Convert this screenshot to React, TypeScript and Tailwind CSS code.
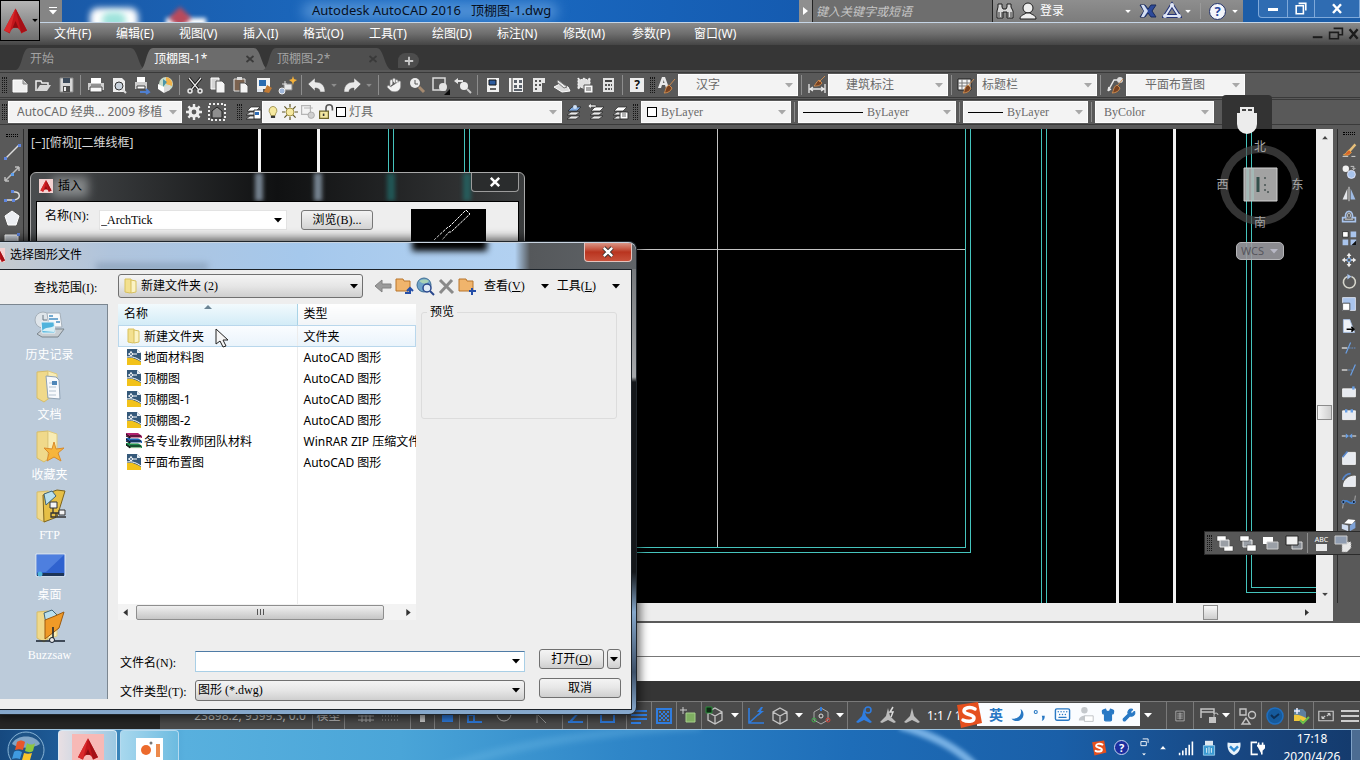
import React from 'react';
import { Hand, Moon, Wrench, Keyboard, Shirt } from 'lucide-react';

const SANS = "[font-family:'Noto_Sans','Noto_Sans_CJK_SC',sans-serif]";
const SONG = "[font-family:'Liberation_Serif','Noto_Sans_CJK_SC',serif]";

interface IcoProps {
  children: React.ReactNode;
  className?: string;
}

const Ico: React.FC<IcoProps> = ({ children, className = 'w-5 h-5' }) => (
  <svg viewBox="0 0 20 20" fill="none" className={`shrink-0 ${className}`}>
    {children}
  </svg>
);

const Caret: React.FC<{ className?: string }> = ({ className = 'text-[#a8a8a8]' }) => (
  <svg viewBox="0 0 8 5" className={`w-2 h-[5px] shrink-0 pointer-events-none ${className}`}>
    <path d="M0 0h8L4 4.5z" fill="currentColor" />
  </svg>
);

interface ComboProps {
  label: string;
  value: string;
  className: string;
  textClass?: string;
  children?: React.ReactNode;
}

const Combo: React.FC<ComboProps> = ({ label, value, className, textClass = SANS, children }) => (
  <div className={`flex items-center h-[22px] bg-[#f3f3f3] border border-[#fdfdfd] pr-1 shrink-0 text-[#6a6a6a] ${className}`}>
    {children}
    <select aria-label={label} className={`appearance-none flex-1 min-w-0 h-full bg-transparent outline-none text-xs ${textClass}`}>
      <option>{value}</option>
    </select>
    <Caret />
  </div>
);

const Grip = () => (
  <div className="w-2 h-4 shrink-0 flex justify-center gap-px">
    <div className="w-px border-l border-dotted border-[#161616]" />
    <div className="w-px border-l border-dotted border-[#161616]" />
    <div className="w-px border-l border-dotted border-[#161616]" />
  </div>
);

const HGrip = () => (
  <div className="h-[9px] flex flex-col items-center justify-center gap-px shrink-0">
    <div className="w-3 border-t border-dotted border-black" />
    <div className="w-3 border-t border-dotted border-black" />
  </div>
);

const Sep = () => <div className="w-px h-5 mx-[3px] bg-[#8d8d8d] shrink-0" />;

const ToolBtn: React.FC<{ label: string; children: React.ReactNode; className?: string }> = ({ label, children, className = 'w-[23px]' }) => (
  <button aria-label={label} className={`h-6 flex items-center justify-center shrink-0 ${className}`}>
    {children}
  </button>
);

const AutodeskA: React.FC<{ className?: string }> = ({ className }) => (
  <svg viewBox="0 0 24 26" className={className}>
    <path d="M12 0L0 23l6 3c1-4 3-6 6-6s5 2 6 6l6-3z" fill="#c3161c" />
    <path d="M12 0L6 25l-6-2z" fill="#d92a2c" />
    <path d="M12 0l6 25 6-2z" fill="#a51016" />
    <path d="M12 13l3 7H9z" fill="#8f0c12" />
  </svg>
);

/* ---------- title bar, menu, tabs ---------- */

const MENUS = ['文件(F)', '编辑(E)', '视图(V)', '插入(I)', '格式(O)', '工具(T)', '绘图(D)', '标注(N)', '修改(M)', '参数(P)', '窗口(W)'];

const MENU_WIDTHS = ['w-[62px]', 'w-[63px]', 'w-16', 'w-[60px]', 'w-[66px]', 'w-[63px]', 'w-[65px]', 'w-[66px]', 'w-[69px]', 'w-[62px]', 'w-[60px]'];

const TitleBar = () => (
  <div className="h-[23px] flex items-stretch bg-[#1660b4] border-b border-[#c5d5e6]">
    <div className="w-[62px] shrink-0 bg-[#858585] flex justify-end">
      <button aria-label="快速访问" className="w-[18px] flex flex-col items-center justify-center gap-[2px] text-white">
        <span className="w-2 h-px bg-white" />
        <Caret className="text-white" />
      </button>
    </div>
    <div className="flex-1 relative overflow-hidden bg-gradient-to-r from-[#1a5aa8] via-[#1b6cc4] to-[#155bb0] flex items-center">
      <div className="absolute left-7 top-2 w-12 h-6 rounded-lg bg-white blur-[3px]" />
      <div className="absolute left-10 top-3 w-6 h-4 rounded-full bg-[#9fe3dc] blur-[3px]" />
      <div className="absolute left-[104px] top-[18px] w-10 h-4 bg-white blur-[2px]" />
      <div className="absolute left-[110px] top-[10px] w-4 h-4 rotate-45 bg-[#b84a5c] blur-[2px]" />
      <div className="absolute left-60 top-[2px] w-64 h-[18px] rounded-full bg-[#6fa8e2]/60 blur-[6px]" />
      <h1 className="relative pl-[250px] text-[13px] text-[#06101f] whitespace-pre">Autodesk AutoCAD 2016   顶棚图-1.dwg</h1>
    </div>
    <div className="w-[444px] shrink-0 bg-gradient-to-b from-[#8e8e8e] to-[#7c7c7c] flex items-center text-white">
      <button aria-label="展开" className="w-[14px] h-full flex items-center justify-center bg-[#8f8f8f] border-r border-[#222]">
        <svg viewBox="0 0 5 8" className="w-[5px] h-2"><path d="M0 0l5 4-5 4z" fill="#fff" /></svg>
      </button>
      <input aria-label="搜索" placeholder="键入关键字或短语" className="w-[180px] h-full px-[3px] bg-[#6e6e6e] border-r border-[#222] text-xs italic placeholder:text-[#c6c6c6] outline-none" />
      <button aria-label="查找" className="ml-[2px]">
        <Ico>
          <path d="M3 3h4v3l1 2h3l1-2V3h4v3l2 4v7h-6v-6h-4v6H2v-7l1-4z" fill="#d8d8d8" stroke="#1d1d1d" />
          <path d="M4 11v5M7 11v5M13 11v5M16 11v5" stroke="#333" />
        </Ico>
      </button>
      <button className="flex items-center gap-[2px] ml-[3px] text-xs w-[100px]">
        <Ico>
          <circle cx="10" cy="7" r="5" fill="#eee" stroke="#1d1d1d" />
          <path d="M2 18c0-4 4-4 6-6h4c2 2 6 2 6 6z" fill="#eee" stroke="#1d1d1d" />
        </Ico>
        登录
      </button>
      <div className="w-[6px]" />
      <button aria-label="登录菜单" className="w-2"><Caret className="text-white scale-75" /></button>
      <button aria-label="Exchange" className="ml-[6px]">
        <Ico>
          <path d="M2 4h5l3 4 3-4h5l-4 6 4 6h-5l-3-4-3 4H2l4-6z" fill="#2d4a9a" stroke="#1a2b5c" />
          <path d="M3 4h3l4 6-4 6H3l3-6z" fill="#d5dff2" />
        </Ico>
      </button>
      <button aria-label="A360" className="ml-1">
        <Ico>
          <path d="M10 4l7 11H3z" stroke="#26357a" strokeWidth="4" />
          <path d="M10 4l7 11H3z" stroke="#dfe6f5" strokeWidth="2" />
          <circle cx="10" cy="4" r="2" fill="#dfe6f5" /><circle cx="3" cy="15" r="2" fill="#dfe6f5" /><circle cx="17" cy="15" r="2" fill="#dfe6f5" />
        </Ico>
      </button>
      <Caret className="text-white scale-75 ml-[2px]" />
      <div className="w-px h-4 bg-[#9a9a9a] ml-2" />
      <button aria-label="帮助" className="ml-2 w-[17px] h-[17px] shrink-0 rounded-full bg-[#f3f5fb] border border-[#23336b] text-[#27479e] text-[13px] leading-[15px] font-bold">?</button>
      <Caret className="text-white scale-75 ml-[5px]" />
    </div>
    <div className="w-[117px] shrink-0 bg-[#1c5da8] flex justify-end items-start">
      <div className="flex h-[18px] w-[102px] border border-t-0 border-[#7fa9da] rounded-bl bg-[#2f6cb2]">
        <button aria-label="最小化" className="w-[29px] flex items-end justify-center pb-[6px] border-r border-[#7fa9da]"><span className="w-[10px] h-[3px] bg-white" /></button>
        <button aria-label="还原" className="w-[27px] flex items-center justify-center border-r border-[#7fa9da]">
          <Ico className="w-4 h-4"><path d="M7 3h9v9M4 6h9v10H4z" stroke="#fff" strokeWidth="2" /></Ico>
        </button>
        <button aria-label="关闭" className="flex-1 flex items-center justify-center">
          <Ico className="w-4 h-4"><path d="M5 4l10 11M15 4L5 15" stroke="#fff" strokeWidth="3" /></Ico>
        </button>
      </div>
    </div>
  </div>
);

const MenuBar = () => (
  <nav className="h-[22px] flex items-center pl-[54px] bg-gradient-to-b from-[#8b8b8b] via-[#6d6d6d] to-[#454545] text-white text-xs">
    {MENUS.map((m, i) => (
      <button key={m} className={`text-left whitespace-nowrap shrink-0 ${MENU_WIDTHS[i]}`}>{m}</button>
    ))}
    <div className="ml-auto flex items-center">
      <button aria-label="最小化图形"><Ico className="w-4 h-4"><path d="M1 14h12" stroke="#1c1c1c" strokeWidth="2.5" /></Ico></button>
      <button aria-label="还原图形"><Ico className="w-4 h-4"><path d="M7 3h11v8h-5M2 8h11v8H2z" stroke="#1c1c1c" strokeWidth="2" /></Ico></button>
      <button aria-label="关闭图形"><Ico className="w-4 h-4"><path d="M7 4l10 12M17 4L7 16" stroke="#1c1c1c" strokeWidth="3" /></Ico></button>
    </div>
  </nav>
);

interface TabProps {
  name: string;
  active?: boolean;
  closable?: boolean;
  width: string;
}

const DocTab: React.FC<TabProps> = ({ name, active, closable, width }) => (
  <div className={`relative h-[22px] flex items-center shrink-0 ${width}`}>
    <svg viewBox="0 0 130 22" preserveAspectRatio="none" className="absolute inset-0 w-full h-full overflow-visible">
      <path d="M0 22C7 20 6 0 14 0h106c8 0 8 20 16 22z" fill={active ? '#6c6c6c' : '#4f4f4f'} />
    </svg>
    <button className={`relative pl-[14px] text-xs ${active ? 'text-white' : 'text-[#a3a3a3]'}`}>{name}</button>
    {closable && (
      <button aria-label="关闭标签" className="relative ml-auto mr-2">
        <Ico className="w-[10px] h-[10px]"><path d="M3 4l14 12M17 4L3 16" stroke="#3a3a3a" strokeWidth="3.5" /></Ico>
      </button>
    )}
  </div>
);

const TabStrip = () => (
  <div className="h-[25px] flex items-end bg-[#363636] pl-4">
    <DocTab name="开始" width="w-[124px]" />
    <DocTab name="顶棚图-1*" active closable width="w-[123px]" />
    <DocTab name="顶棚图-2*" closable width="w-[123px]" />
    <button aria-label="新建标签" className="ml-3 mb-[2px] w-[21px] h-[15px] rounded-full rounded-bl-none bg-[#4d4d4d] flex items-center justify-center">
      <Ico className="w-3 h-3"><path d="M10 3v14M3 10h14" stroke="#c9c9c9" strokeWidth="3" /></Ico>
    </button>
  </div>
);

/* ---------- toolbars ---------- */

const Brush = () => <path d="M18 4l-6 7M12 10l3 3c-1 3-4 5-8 5 2-2 1-6 5-8z" stroke="#c98a50" fill="#7a4220" />;

const StandardBar = () => (
  <div className="h-[26px] flex items-center border-t border-b border-[#3a3a3a]">
    <Grip />
    <ToolBtn label="新建"><Ico><path d="M3 5h10l4 4v8H3z" fill="#f0f0f0" stroke="#fff" /><path d="M13 5v4h4" fill="#bbb" stroke="#888" /></Ico></ToolBtn>
    <ToolBtn label="打开"><Ico><path d="M3 16V6h5l1 2h6v2" stroke="#eee" strokeWidth="1.5" /><path d="M3 16l4-6h11l-4 6z" fill="#d8d8d8" /></Ico></ToolBtn>
    <ToolBtn label="保存"><Ico><path d="M4 3h13v14H4z" fill="#d6d6d6" stroke="#8a8a8a" /><path d="M7 3h7v5H7z" fill="#3c4a5a" /><path d="M7 11h7v6H7z" fill="#4a4a4a" /><path d="M9 12v4" stroke="#eee" strokeWidth="2" /></Ico></ToolBtn>
    <Sep />
    <ToolBtn label="打印"><Ico><path d="M5 3h10v5H5z" fill="#fff" /><path d="M2 8h16v7H2z" fill="#cfcfcf" /><path d="M4 12h12v5H4z" fill="#f8f8f8" stroke="#444" /><path d="M5 10h10" stroke="#555" /></Ico></ToolBtn>
    <ToolBtn label="打印预览"><Ico><path d="M4 3h9l3 3v11H4z" fill="#eee" /><circle cx="10" cy="11" r="4" fill="#c9d2dc" stroke="#333" /><path d="M13 14l4 4" stroke="#ddd" strokeWidth="2" /></Ico></ToolBtn>
    <ToolBtn label="发布"><Ico><path d="M5 2h8v5H5z" fill="#fff" /><path d="M3 7h12v7H3z" fill="#cfcfcf" /><path d="M5 11h8v3H5z" fill="#fff" stroke="#444" /><path d="M8 17h9m-3-3l3 3-3 2" stroke="#4f7fd0" strokeWidth="2" /></Ico></ToolBtn>
    <ToolBtn label="三维打印"><Ico><circle cx="11" cy="9" r="7" fill="#c9dccb" /><path d="M11 2a7 7 0 016 9l-6-2z" fill="#f1b24a" /><path d="M8 4l4 3-4 5z" fill="#4b95a8" /><path d="M3 9l6 3v6l-6-4z" fill="#fff" /><path d="M9 12l6-2v5l-6 3z" fill="#d9d9d9" /></Ico></ToolBtn>
    <Sep />
    <ToolBtn label="剪切"><Ico><path d="M4 3l9 11M16 3L7 14" stroke="#111" strokeWidth="3" /><path d="M4 3l9 11M16 3L7 14" stroke="#e8e8e8" strokeWidth="1.2" /><circle cx="5" cy="16" r="2" stroke="#e8e8e8" strokeWidth="1.5" /><circle cx="15" cy="16" r="2" stroke="#e8e8e8" strokeWidth="1.5" /></Ico></ToolBtn>
    <ToolBtn label="复制"><Ico><path d="M3 3h8v11H3z" fill="#d4d4d4" stroke="#fff" /><path d="M8 6h6l3 3v9H8z" fill="#f4f4f4" stroke="#555" /></Ico></ToolBtn>
    <ToolBtn label="粘贴"><Ico><path d="M3 4h11v12H3z" fill="#7b624f" stroke="#e4e4e4" /><path d="M6 2h5v3H6z" fill="#ddd" /><path d="M9 8h5l3 3v7H9z" fill="#f4f4f4" stroke="#555" /></Ico></ToolBtn>
    <ToolBtn label="特性匹配"><Ico><path d="M3 3h13v11H3z" fill="#f1f1f1" /><path d="M5 5h7v6H5z" fill="#2b6cb0" /><path d="M13 10l-3 7 5 1 3-5z" fill="#c07a35" /><path d="M3 14h6v3H3z" fill="#dfe5ee" /></Ico></ToolBtn>
    <ToolBtn label="块编辑器"><Ico><path d="M7 9h8v6H7z" fill="#e8e8e8" stroke="#888" /><circle cx="5" cy="16" r="3" fill="#9fb6d9" stroke="#eee" /><path d="M5 9h5M8 6v4" stroke="#ddd" /><path d="M16 1l1 3 3 1-3 2-1 3-1-3-3-2 3-1z" fill="#f4b13a" /></Ico></ToolBtn>
    <Sep />
    <ToolBtn label="放弃"><Ico><path d="M1 9l7-6v4c6 0 10 3 10 10h-5c0-3-2-4-5-4v3z" fill="#e9e9e9" stroke="#555" strokeWidth=".5" /></Ico></ToolBtn>
    <ToolBtn label="放弃列表" className="w-3"><Caret className="scale-75 text-[#8d8d8d]" /></ToolBtn>
    <ToolBtn label="重做"><Ico><path d="M19 9l-7-6v4c-6 0-10 3-10 10h5c0-3 2-4 5-4v3z" fill="#e9e9e9" stroke="#555" strokeWidth=".5" /></Ico></ToolBtn>
    <ToolBtn label="重做列表" className="w-3"><Caret className="scale-75 text-[#8d8d8d]" /></ToolBtn>
    <Sep />
    <ToolBtn label="平移"><Hand size={16} color="#8a8a8a" fill="#f2f2f2" strokeWidth={1} /></ToolBtn>
    <ToolBtn label="实时缩放"><Ico><circle cx="8" cy="8" r="5" fill="#ececec" /><path d="M8 5v4h3" stroke="#555" /><path d="M12 12l5 5" stroke="#a58a70" strokeWidth="3" /></Ico></ToolBtn>
    <ToolBtn label="窗口缩放"><Ico><path d="M3 3h12v12H3z" stroke="#dcdcdc" strokeWidth="1.5" /><circle cx="13" cy="12" r="4" fill="#e4e4e4" /><path d="M20 14v6h-6z" fill="#0b0b0b" /></Ico></ToolBtn>
    <ToolBtn label="缩放上一个"><Ico><path d="M1 6l4-3v2h5v2H5v2z" fill="#e4e4e4" /><circle cx="11" cy="11" r="4" fill="#ececec" /><path d="M14 14l4 4" stroke="#ccc" strokeWidth="2" /></Ico></ToolBtn>
    <Sep />
    <ToolBtn label="特性"><Ico><path d="M4 3h12v14H4z" fill="#f0f0f0" /><path d="M6 5h7v5H6z" fill="#2c5a9c" stroke="#111" /><path d="M7 14h6" stroke="#333" strokeWidth="1.5" /></Ico></ToolBtn>
    <ToolBtn label="设计中心"><Ico><path d="M3 3h14v14H3z" fill="#f0f0f0" /><path d="M6 3v14" stroke="#333" /><path d="M8 5h3v3H8zM13 5h3v3h-3zM8 10h3v3H8zM13 10h3v3h-3zM8 14h8v2H8z" fill="#59606a" /></Ico></ToolBtn>
    <ToolBtn label="工具选项板"><Ico><path d="M4 3h12v5h-3v9H4z" fill="#e6e6e6" /><path d="M6 5h2v2H6zM10 5h2v2h-2zM6 9h2v2H6zM10 9h2v2h-2zM6 13h2v2H6z" fill="#555" /></Ico></ToolBtn>
    <ToolBtn label="图纸集"><Ico><path d="M2 12l6-3 8 3 2 4-8 1z" fill="#d9d9d9" stroke="#fff" /><path d="M6 5l9 7-3 1-7-6z" fill="#ececec" stroke="#777" /></Ico></ToolBtn>
    <ToolBtn label="标记集"><Ico><path d="M3 3l3 2 3-2 3 2 3-2v10l-3-1-3 2-3-2-3 2z" fill="#e0e0e0" stroke="#fff" strokeDasharray="2 1" /><path d="M9 10h9v8H9z" fill="#fafafa" stroke="#555" /><path d="M11 13h5M11 15h5" stroke="#555" /></Ico></ToolBtn>
    <ToolBtn label="计算器"><Ico><path d="M5 3h11v14H5z" fill="#e3e3e3" /><path d="M7 5h7v2H7z" fill="#444" /><path d="M7 9h2v2H7zM10 9h2v2h-2zM13 9h1v2h-1zM7 13h2v2H7zM10 13h2v2h-2zM13 13h1v2h-1z" fill="#555" /></Ico></ToolBtn>
    <Sep />
    <ToolBtn label="帮助" className="w-[22px]"><span className="w-[14px] h-[14px] bg-[#ececec] text-[#111] text-xs leading-[14px] font-bold text-center">?</span></ToolBtn>
    <Grip />
    <ToolBtn label="文字样式" className="w-[22px]"><Ico><path d="M1 13L5 2h3l4 11H9l-1-3H5l-1 3zM6 8h1.500L6.700 5z" fill="#e9e9e9" /><Brush /></Ico></ToolBtn>
    <Combo label="文字样式列表" value="汉字" className="w-[120px] pl-[17px]" />
    <Sep />
    <ToolBtn label="标注样式"><Ico><path d="M2 9v9M18 9v9M3 14h14M6 12l-3 2 3 2M14 12l3 2-3 2" stroke="#e9e9e9" strokeWidth="1.3" /><path d="M18 1l-6 6M12 5l3 3c-2 3-5 3-8 3 2-2 2-4 5-6z" stroke="#c98a50" fill="#7a4220" /></Ico></ToolBtn>
    <Combo label="标注样式列表" value="建筑标注" className="w-[120px] pl-[17px]" />
    <Sep />
    <ToolBtn label="表格样式" className="w-[22px]"><Ico><path d="M2 4h13v11H2z" fill="#f3f3f3" stroke="#222" /><path d="M2 8h13M2 11h13M6 4v11M11 4v11" stroke="#777" /><Brush /></Ico></ToolBtn>
    <Combo label="表格样式列表" value="标题栏" className="w-[120px] pl-1" />
    <Sep />
    <ToolBtn label="多重引线样式" className="w-[22px]"><Ico><path d="M3 16L9 5h4M3 16l1-4M3 16l3-2" stroke="#e9e9e9" strokeWidth="1.5" /><circle cx="15" cy="5" r="3" fill="#ddd" /><Brush /></Ico></ToolBtn>
    <Combo label="多重引线样式列表" value="平面布置图" className="w-[119px] pl-[18px]" />
  </div>
);

const Layers: React.FC<{ tint: string; children?: React.ReactNode }> = ({ tint, children }) => (
  <Ico>
    <path d="M3 17l4-3h9l-4 3zM3 13l4-3h9l-4 3z" fill="#e8e8e8" stroke="#222" strokeWidth=".7" />
    <path d="M4 9l4-4h9l-4 4z" fill={tint} stroke="#222" strokeWidth=".7" />
    {children}
  </Ico>
);

const LayerBar = () => (
  <div className="h-[26px] flex items-center border-t border-b border-[#3a3a3a]">
    <Grip />
    <Combo label="工作空间" value="AutoCAD 经典... 2009 移植" className="w-[174px] pl-2" />
    <ToolBtn label="工作空间设置">
      <Ico className="w-4 h-4">
        <circle cx="10" cy="10" r="5" stroke="#ededed" strokeWidth="4" />
        <path d="M10 0v4M10 16v4M0 10h4M16 10h4M3 3l3 3M14 14l3 3M17 3l-3 3M6 14l-3 3" stroke="#ededed" strokeWidth="3" />
      </Ico>
    </ToolBtn>
    <ToolBtn label="我的工作空间">
      <Ico>
        <path d="M2 2h16v16H2z" stroke="#ededed" strokeWidth="2" strokeDasharray="2 2" />
        <path d="M5 16V9l5-4 5 4v7z" fill="#8e8e8e" stroke="#222" />
      </Ico>
    </ToolBtn>
    <div className="w-[7px]" />
    <Grip />
    <ToolBtn label="图层特性" className="w-[19px]"><Layers tint="#fff"><path d="M11 8h7v9h-7z" fill="#fff" stroke="#333" /><path d="M12 10h4v3h-4z" fill="#2d6bb5" /></Layers></ToolBtn>
    <Combo label="图层" value="灯具" className="w-[300px] pl-[3px] gap-[2px]">
      <Ico className="w-[14px] h-4"><path d="M10 2a6 6 0 00-4 10l1 3h6l1-3a6 6 0 00-4-10z" fill="#f6e9a0" stroke="#8a7a2a" /><path d="M7 17h6" stroke="#333" strokeWidth="3" /></Ico>
      <Ico className="w-4 h-4"><circle cx="10" cy="10" r="5" fill="#f6e9a0" stroke="#8a7a2a" /><path d="M10 0v4M10 16v4M0 10h4M16 10h4M3 3l3 3M14 14l3 3M17 3l-3 3M6 14l-3 3" stroke="#5e5526" strokeWidth="1.5" /></Ico>
      <Ico className="w-4 h-4"><path d="M2 2h11v11H2zM5 5h11" stroke="#b5b5b5" strokeWidth="1.5" /><circle cx="14" cy="14" r="4" fill="#cfcfcf" stroke="#a5a5a5" /></Ico>
      <Ico className="w-4 h-4"><path d="M2 9h11v9H2z" fill="#f2e6a0" stroke="#6f662b" strokeWidth="1.5" /><path d="M10 9V5a4 4 0 018 0v3" stroke="#555" strokeWidth="2" /><path d="M7 12v3" stroke="#333" strokeWidth="2" /></Ico>
      <span className="w-[10px] h-[10px] border border-black bg-white shrink-0 mr-[1px]" />
    </Combo>
    <ToolBtn label="置为当前"><Layers tint="#7fa9e0"><circle cx="11" cy="5" r="2" fill="#cfe0f5" /></Layers></ToolBtn>
    <ToolBtn label="上一个图层"><Layers tint="#fff"><path d="M1 4l3-3v2h5v2H4v2z" fill="#e8e8e8" stroke="#333" strokeWidth=".5" /></Layers></ToolBtn>
    <ToolBtn label="图层状态"><Layers tint="#fff"><path d="M10 10h8v7h-8z" fill="#fff" stroke="#333" /><path d="M12 12h4M12 14h4" stroke="#666" /></Layers></ToolBtn>
    <Grip />
    <div className="w-[2px]" />
    <Combo label="颜色" value="ByLayer" className="w-[150px] pl-[5px] gap-1" textClass={SONG}>
      <span className="w-[10px] h-[10px] border border-black bg-white shrink-0" />
    </Combo>
    <Sep />
    <Combo label="线型" value="ByLayer" className="w-[158px] pl-1 gap-1" textClass={SONG}>
      <span className="w-[60px] h-px bg-black shrink-0" />
    </Combo>
    <Sep />
    <Combo label="线宽" value="ByLayer" className="w-[125px] pl-1 gap-1" textClass={SONG}>
      <span className="w-[35px] h-px bg-black shrink-0" />
    </Combo>
    <Sep />
    <Combo label="打印样式" value="ByColor" className="w-[119px] pl-2" textClass={SONG} />
  </div>
);

const DrawBar = () => (
  <div className="w-6 shrink-0 border-r border-[#2c2c2c] flex flex-col items-center gap-[2px] pt-[2px] overflow-hidden">
    <HGrip />
    <button aria-label="直线"><Ico><path d="M4 16L17 3" stroke="#ddd" strokeWidth="1.5" /><path d="M2 15h3v3H2zM16 2h3v3h-3z" fill="#5f86e0" /></Ico></button>
    <button aria-label="构造线"><Ico><path d="M3 17L17 3M3 17v-4M3 17h4M17 3h-4M17 3v4" stroke="#bdbdbd" strokeWidth="1.5" /><path d="M9 9h3v3H9z" fill="#5fa0ee" /></Ico></button>
    <button aria-label="多段线"><Ico><path d="M3 14h9c8-1 6-9 0-8" stroke="#ddd" strokeWidth="1.5" /><path d="M2 13h3v3H2zM10 13h3v3h-3zM9 4h3v3H9z" fill="#5f86e0" /></Ico></button>
    <button aria-label="多边形"><Ico><path d="M10 3l7 5-3 9H6L3 8z" fill="#eceef2" stroke="#fff" /></Ico></button>
    <button aria-label="矩形"><Ico><path d="M3 5h13v12H3z" fill="#d5dae2" stroke="#fff" /><path d="M15 3h3v3h-3z" fill="#5f86e0" /></Ico></button>
  </div>
);

const MODIFY_ICONS: { label: string; art: React.ReactNode }[] = [
  { label: '删除', art: <><path d="M18 3l-8 9" stroke="#e8c07a" strokeWidth="3" /><path d="M10 10l3 3c-3 4-6 4-10 3 4-1 4-5 7-6z" fill="#d8662a" stroke="#f2b04e" /><path d="M2 18h7M13 18h5" stroke="#eee" /></> },
  { label: '复制', art: <><circle cx="6" cy="6" r="4" fill="#f1f1f1" /><circle cx="13" cy="13" r="5" fill="#a9c4ec" stroke="#eef" /><path d="M12 3h4v4m-2-2l2 2 2-2" stroke="#ddd" /></> },
  { label: '镜像', art: <><path d="M8 3v14H2z" fill="#e4e6ea" /><path d="M12 3v14h6z" fill="#9fbbe4" /><path d="M10 1v18" stroke="#fff" /></> },
  { label: '偏移', art: <><path d="M2 17h16v-5h-4c1-3 0-8-4-8s-5 5-4 8H2z" stroke="#a9c4ec" strokeWidth="2" /><path d="M5 14h10M9 12c-2-3 0-6 1-6s3 3 1 6" stroke="#eee" /></> },
  { label: '阵列', art: <><path d="M2 2h7v7H2z" fill="#fff" stroke="#222" /><path d="M12 2h7v7h-7zM2 12h7v7H2zM12 12h7v7h-7z" fill="#a9c4ec" /><path d="M19 13v6h-6z" fill="#111" /></> },
  { label: '移动', art: <><path d="M10 1l3 4h-2v3H9V5H7zM10 19l-3-4h2v-3h2v3h2zM1 10l4-3v2h3v2H5v2zM19 10l-4 3v-2h-3V9h3V7z" fill="#eee" /><path d="M8 8h4v4H8z" stroke="#6aa0e6" /></> },
  { label: '旋转', art: <><path d="M8 3a7.500 7.500 0 105 0" stroke="#d6d6cc" strokeWidth="2" /><path d="M8 0l5 3-5 4z" fill="#a9c4ec" /></> },
  { label: '缩放', art: <><path d="M2 2h16v16H2z" fill="#a9c4ec" stroke="#e8eefa" /><path d="M2 9h9v9H2z" fill="#fff" stroke="#333" /></> },
  { label: '拉伸', art: <><path d="M3 2h8l6 16H3z" fill="#eef2f8" stroke="#a9c4ec" /><path d="M7 14h9m-3-3l3 3-3 3" stroke="#000" strokeWidth="2" /></> },
  { label: '修剪', art: <><path d="M1 10h7" stroke="#eee" strokeWidth="1.5" /><path d="M10 10h9" stroke="#6aa0e6" strokeDasharray="2 1" /><path d="M6 17l6-14" stroke="#6aa0e6" strokeWidth="1.5" /></> },
  { label: '延伸', art: <><path d="M1 10h7" stroke="#eee" strokeWidth="1.5" /><path d="M9 10h5" stroke="#6aa0e6" strokeDasharray="2 1" /><path d="M12 17l6-14" stroke="#6aa0e6" strokeWidth="1.5" /></> },
  { label: '打断于点', art: <><path d="M2 6h16v10H2z" fill="#e7eaf0" stroke="#fff" /><path d="M14 3h3v4h-3z" fill="#6aa0e6" /></> },
  { label: '打断', art: <><path d="M2 6h16v11H2z" fill="#e7eaf0" stroke="#fff" /><path d="M5 4h3v4H5zM12 4h3v4h-3z" fill="#6aa0e6" /></> },
  { label: '合并', art: <><path d="M1 10h5M14 10h5" stroke="#eee" strokeWidth="1.5" /><path d="M6 7l4 3-4 3zM14 7l-4 3 4 3z" fill="#6aa0e6" /></> },
  { label: '倒角', art: <><path d="M8 3h10v15H2V9z" fill="#e7eaf0" stroke="#fff" /><path d="M2 9l6-7" stroke="#5585cc" strokeWidth="2" /></> },
  { label: '圆角', art: <><path d="M18 5v13H3c0-8 6-13 15-13z" fill="#e7eaf0" stroke="#fff" /><path d="M2 10c2-5 5-8 10-8" stroke="#5585cc" strokeWidth="2" /></> },
  { label: '光顺曲线', art: <><path d="M3 10c5-6 8 6 13 0" stroke="#3f84d8" strokeWidth="2" /><path d="M2 18l1-7M17 9l1-7" stroke="#bbb" /><circle cx="3" cy="10" r="2" fill="#12213a" stroke="#6aa0e6" /><circle cx="16" cy="10" r="2" fill="#12213a" stroke="#6aa0e6" /></> },
  { label: '分解', art: <><path d="M4 9l5-5 9 1-4 5z" fill="#fff" /><path d="M1 10l8 2v7l-8-3z" fill="#cfdcf0" /><path d="M11 12l7-5v8l-7 4z" fill="#7fa3d8" /></> },
];

const ModifyBar = () => (
  <div className="w-[23px] ml-1 shrink-0 border-l border-[#2c2c2c] flex flex-col items-center gap-[2px] overflow-hidden">
    <HGrip />
    {MODIFY_ICONS.map((m) => (
      <button key={m.label} aria-label={m.label} className="shrink-0">
        <Ico className="w-4 h-5">{m.art}</Ico>
      </button>
    ))}
  </div>
);

/* ---------- drawing canvas ---------- */

const ViewCube = () => (
  <div className="absolute right-[15px] top-[10px] w-[82px] flex flex-col items-center text-xs text-[#a5a5a5]">
    <div className="relative w-[82px] h-[92px] flex flex-col items-center justify-between">
      <svg viewBox="0 0 82 82" className="absolute left-0 top-[5px] w-[82px] h-[82px]">
        <circle cx="41" cy="41" r="36" fill="none" stroke="#4a4a4a" strokeOpacity=".7" strokeWidth="8" />
        <path d="M25 24h33v33H25z" fill="#b4b4b4" fillOpacity=".9" stroke="#d0d0d0" />
        <path d="M29 24v33M34 24v33" stroke="#a5d0ca" />
        <path d="M39 33v15" stroke="#33504c" strokeWidth="3" />
        <path d="M46 33v2M46 40v2M49 47v2M46 45v2" stroke="#5d6665" strokeWidth="2" />
      </svg>
      <span className="relative leading-4">北</span>
      <div className="relative w-[87px] flex justify-between leading-4"><span>西</span><span>东</span></div>
      <span className="relative leading-4">南</span>
    </div>
    <button className="mt-[11px] w-12 h-[18px] rounded-[5px] border border-[#b5b5b8] bg-[#9a9aa0]/90 text-[#55555c] text-[11px] leading-4 flex items-center gap-[6px] pl-1">
      WCS<Caret className="text-[#b9b9c6]" />
    </button>
  </div>
);

const Canvas = () => (
  <div className="flex-1 relative bg-black overflow-hidden">
    <svg className="absolute inset-0 w-full h-full" fill="none" shapeRendering="crispEdges">
      <path d="M231 0v474M290 0v474M1089 0v474M1146 0v474" stroke="#f2f2f2" strokeWidth="3" />
      <path
        d="M360.500 0v474M365.500 0v474M436.500 0v474M441.500 0v474M937.500 0v418.500H0M942.500 0v423.500H0M1013.500 0v474M1018.500 0v474M1218.500 0v463.500h80M1223.500 0v458.500h80"
        stroke="#45c4bd"
      />
      <path d="M689.500 0v418M0 120.500h937" stroke="#c4c4c4" />
    </svg>
    <button className="absolute left-[3px] top-[5px] text-xs leading-[18px] text-[#d8d8d8]">[−][俯视][二维线框]</button>
    <ViewCube />
  </div>
);

const VScroll = () => (
  <div className="w-[17px] shrink-0 bg-[#ededed] flex flex-col items-center justify-between py-[6px]">
    <Caret className="text-[#444] rotate-180 scale-75" />
    <div className="w-[15px] h-[15px] mt-[92px] border border-[#8c8c8c] bg-gradient-to-r from-[#f5f5f5] to-[#cfcfcf]" />
    <Caret className="text-[#444] scale-75" />
  </div>
);

const OrderBar = () => (
  <div className="absolute right-0 top-[531px] w-[156px] h-6 bg-[#575757] border border-[#2b2b2b] border-r-0 flex items-center overflow-hidden">
    <Grip />
    <ToolBtn label="前置"><Ico><path d="M2 3h9v5H2zM9 13h9v5H9z" fill="#fff" stroke="#333" strokeWidth=".5" /><path d="M5 7h9v7H5z" fill="#9a9fa6" stroke="#eee" /></Ico></ToolBtn>
    <ToolBtn label="后置"><Ico><path d="M5 7h9v7H5z" fill="#9a9fa6" stroke="#eee" /><path d="M2 3h9v5H2zM9 12h9v6H9z" fill="#fff" stroke="#333" strokeWidth=".5" /></Ico></ToolBtn>
    <ToolBtn label="置于对象之上"><Ico><path d="M2 4h10v7H2z" fill="#fff" /><path d="M6 9h11v7H6z" fill="#9a9fa6" stroke="#ccc" /></Ico></ToolBtn>
    <ToolBtn label="置于对象之下"><Ico><path d="M8 9h10v7H8z" fill="#8a8f96" stroke="#ddd" /><path d="M2 3h12v9H2z" fill="#f1f1f1" stroke="#222" /></Ico></ToolBtn>
    <div className="w-px h-5 mx-[2px] bg-[#8d8d8d] shrink-0" />
    <ToolBtn label="文字前置">
      <span className="flex flex-col items-center text-[7px] leading-[8px] text-white">ABC<span className="w-[11px] h-[7px] bg-[#e8e8e8]" /></span>
    </ToolBtn>
    <ToolBtn label="图案填充后置" className="w-5"><Ico><path d="M9 9h9v6l-4 4H9z" fill="#e6e6e6" stroke="#999" strokeDasharray="1 1" /><path d="M2 3h12v8H2z" fill="#8f9cb0" stroke="#ccc" /></Ico></ToolBtn>
  </div>
);

const UsbBadge = () => (
  <div className="absolute right-[88px] top-[95px] w-[50px] h-10 flex justify-center pt-3">
    <div className="absolute inset-x-0 top-0 h-[34px] rounded-t bg-[#333]" />
    <svg viewBox="0 0 24 28" className="relative w-6 h-7">
      <path d="M5 0h14v6h3v11a10 10 0 01-20 0V6h3z" fill="#ececec" />
      <path d="M7 2h4v2H7zM13 2h4v2h-4z" fill="#444" />
    </svg>
  </div>
);

/* ---------- dialogs ---------- */

const CloseX = () => <Ico className="w-[14px] h-[14px]"><path d="M4 4l12 12M16 4L4 16" stroke="#333" strokeWidth="6" /><path d="M4 4l12 12M16 4L4 16" stroke="#fff" strokeWidth="3.5" /></Ico>;

const InsertDialog = () => (
  <section className={`absolute left-[30px] top-[172px] w-[495px] h-[90px] rounded-t-md border border-[#a9a9a9] bg-gradient-to-r from-[#4a4d4f] via-[#101112] to-[#3a3c3d] px-[5px] text-xs text-black ${SONG}`}>
    <header className="h-7 flex items-start justify-between relative overflow-hidden">
      <div className="absolute left-[219px] top-0 w-2 h-7 bg-[#9fb2c4]/70 blur-[2px]" />
      <div className="absolute left-[278px] top-0 w-2 h-7 bg-[#9fb2c4]/70 blur-[2px]" />
      <div className="absolute left-[351px] top-0 w-2 h-7 bg-[#1f7a78]/60 blur-[2px]" />
      <div className="absolute left-[427px] top-0 w-2 h-7 bg-[#1f7a78]/60 blur-[2px]" />
      <div className="absolute left-4 top-1 w-9 h-5 bg-[#85888a] blur-[5px]" />
      <div className={`relative flex items-center gap-[5px] pt-[5px] pl-[3px] ${SANS}`}>
        <span className="w-[14px] h-[14px] bg-[#f4d3d2] flex items-center justify-center"><AutodeskA className="w-3 h-3" /></span>
        <span className="leading-4 text-black">插入</span>
      </div>
      <button aria-label="关闭插入" className="relative w-12 h-[19px] border border-t-0 border-[#9c9c9c] rounded-b bg-[#2a2c2d] flex items-center justify-center"><CloseX /></button>
    </header>
    <div className="h-[61px] bg-[#eee] border border-black border-b-0 pl-2 pr-8 flex items-start">
      <label htmlFor="block-name" className="w-[54px] shrink-0 pt-[6px] leading-4">名称(N):</label>
      <div className="mt-2 w-[190px] h-5 bg-white border border-[#e3e3e3] flex items-center pr-1">
        <select id="block-name" className="appearance-none flex-1 h-full pl-px bg-transparent outline-none"><option>_ArchTick</option></select>
        <Caret className="text-black" />
      </div>
      <button className="ml-[14px] mt-2 w-[73px] h-5 border border-[#777] rounded-[3px] bg-gradient-to-b from-[#f3f3f3] to-[#d3d3d3] leading-4">浏览(B)...</button>
      <svg viewBox="0 0 75 46" className="ml-[38px] mt-[7px] w-[75px] h-[46px] bg-black shrink-0">
        <path d="M23 31l14-13 1 0 17-17 4 4-19 18h-2L31 31" fill="none" stroke="#fff" strokeDasharray="3 1" />
      </svg>
    </div>
  </section>
);

const FolderArt: React.FC<{ children?: React.ReactNode }> = ({ children }) => (
  <svg viewBox="0 0 36 36" className="w-9 h-9" fill="none">
    <path d="M5 3l11-1v28l-4 3-7-4z" fill="#f0d98a" stroke="#d6bd6a" />
    <path d="M16 2l9 3v22l-9 3z" fill="#f8ecb4" stroke="#dfca80" />
    {children}
  </svg>
);

const PLACES: { label: string; font?: string; art: React.ReactNode }[] = [
  {
    label: '历史记录',
    font: SANS,
    art: (
      <svg viewBox="0 0 36 36" className="w-9 h-9" fill="none">
        <circle cx="11" cy="11" r="8" fill="#dfe5ea" stroke="#a5b0ba" /><path d="M11 6v5h4" stroke="#6b7884" />
        <path d="M15 4h13l2 14H17z" fill="#f6f8fa" stroke="#a5b0ba" /><path d="M17 7h4M17 10h9M24 13h4" stroke="#4a8fc2" strokeWidth="1.5" />
        <path d="M5 25l6-5h21l-6 8H10z" fill="#c8ced3" stroke="#7b858c" /><path d="M9 13h13l1 11H10z" fill="#4fb3dc" stroke="#e8f3f9" />
        <path d="M10 22c4-5 8-2 12-5v6z" fill="#d7f0f7" />
      </svg>
    ),
  },
  { label: '文档', art: <FolderArt><path d="M14 7l10 1 3 3 1 19-12-1z" fill="#f7f9fc" stroke="#8fa2b5" /><path d="M17 14h7M17 18h7M17 22h7M17 26h7" stroke="#b3c2d0" /><path d="M20 12h5v4h-5z" fill="#4f86b8" /></FolderArt> },
  { label: '收藏夹', art: <FolderArt><path d="M22 13l2 7 8-1-6 5 3 8-7-4-7 4 2-8-5-5 8 1z" fill="#f7b53c" stroke="#d98b2c" /></FolderArt> },
  { label: 'FTP', art: <FolderArt><path d="M11 6l14-5 8 1-8 26-13 5z" fill="#e6bf46" stroke="#7c631d" /><path d="M12 5l8-3 4 5-10 9z" fill="#b9dfee" stroke="#3f6478" /><path d="M18 13h7v6h-7zM27 21h6v5h-6z" fill="#f4f4f4" stroke="#333" /><path d="M21 19v5h6M19 24h5v4h-5zM25 28h9" stroke="#333" strokeWidth="1.3" /></FolderArt> },
  {
    label: '桌面',
    art: (
      <svg viewBox="0 0 36 36" className="w-9 h-9" fill="none">
        <path d="M4 5h29v22H4z" fill="#2f62cf" stroke="#dfe9f5" /><path d="M5 6h27L14 23H5z" fill="#6d9cf0" fillOpacity=".5" />
        <path d="M5 24h27v3H5z" fill="#1d3558" /><circle cx="8" cy="25" r="2.500" fill="#4fb3dc" />
      </svg>
    ),
  },
  { label: 'Buzzsaw', art: <FolderArt><path d="M12 4l8-3 5 5-11 9z" fill="#b9dfee" stroke="#3f6478" /><path d="M13 11l10-4 9-4-5 16-14 11z" fill="#f09a27" stroke="#9c5a10" /><path d="M4 32h29M21 18v12" stroke="#16202e" strokeWidth="1.5" /><circle cx="20" cy="31" r="2.500" fill="#e9e9e9" stroke="#16202e" /></FolderArt> },
];

const FolderIcon = () => (
  <svg viewBox="0 0 16 16" className="w-4 h-4 shrink-0" fill="none">
    <path d="M2 1h6l1 13-2 1-5-1z" fill="#f3e08f" stroke="#d8c15f" /><path d="M8 2l5 1v11l-5 1z" fill="#fbf3c4" stroke="#d8c15f" />
  </svg>
);

const DwgIcon = () => (
  <svg viewBox="0 0 16 16" className="w-4 h-4 shrink-0" fill="none">
    <path d="M1 0h10l4 4v12H1z" fill="#35597a" /><path d="M11 0l4 4h-4z" fill="#e6edf3" />
    <path d="M1 9c5-1 9 1 14 4v3H1z" fill="#f2c21a" /><path d="M1 8c5-1 10 1 14 4" stroke="#fff" />
    <path d="M2 5h9M5 2v5" stroke="#fff" /><circle cx="5" cy="5" r="1.500" fill="#35597a" stroke="#fff" />
  </svg>
);

const RarIcon = () => (
  <svg viewBox="0 0 16 16" className="w-4 h-4 shrink-0" fill="none">
    <path d="M0 0h12l4 3v2H4L0 3z" fill="#b0226f" /><path d="M0 5h12l4 3v2H4L0 8z" fill="#1f63b5" /><path d="M0 10h12l4 3v2H4l-4-3z" fill="#1f9150" />
    <path d="M4 5h11M4 10h11M4 15h11" stroke="#f2e9d8" /><path d="M0 1l4 3v1L0 3M0 6l4 3v1L0 8M0 11l4 3v1l-4-3M4 3h11M4 8h11M4 13h11" stroke="#111" />
  </svg>
);

const FILES = [
  { name: '新建文件夹', type: '文件夹', icon: <FolderIcon />, hot: true },
  { name: '地面材料图', type: 'AutoCAD 图形', icon: <DwgIcon /> },
  { name: '顶棚图', type: 'AutoCAD 图形', icon: <DwgIcon /> },
  { name: '顶棚图-1', type: 'AutoCAD 图形', icon: <DwgIcon /> },
  { name: '顶棚图-2', type: 'AutoCAD 图形', icon: <DwgIcon /> },
  { name: '各专业教师团队材料', type: 'WinRAR ZIP 压缩文件', icon: <RarIcon /> },
  { name: '平面布置图', type: 'AutoCAD 图形', icon: <DwgIcon /> },
];

const DIALOG_BTN = 'border border-[#707070] rounded-[3px] bg-gradient-to-b from-[#f4f4f4] via-[#e6e6e6] to-[#cfcfcf] flex items-center justify-center';

const FileList = () => (
  <div className={`w-[298px] shrink-0 ${SANS}`}>
    <div className="h-[300px] overflow-hidden bg-white">
      <table className="w-full h-full table-fixed border-collapse text-xs text-left whitespace-nowrap">
        <colgroup><col className="w-[179px]" /><col /></colgroup>
        <thead>
          <tr className="h-[21px]">
            <th className="relative font-normal p-0 pl-[6px] bg-gradient-to-b from-[#f2fafd] to-[#d3ecf7] border-r border-b border-[#a9d3e6]">
              名称
              <svg viewBox="0 0 8 4" className="absolute left-[86px] top-px w-2 h-1"><path d="M0 4l4-4 4 4z" fill="#6b8494" /></svg>
            </th>
            <th className="font-normal p-0 pl-[6px] bg-gradient-to-b from-white to-[#f1f4f7] border-b border-[#d5dfe6]">类型</th>
          </tr>
        </thead>
        <tbody>
          {FILES.map((f) => (
            <tr key={f.name} className={`h-[21px] ${f.hot ? 'bg-gradient-to-b from-[#fbfdff] to-[#e9f3fb] outline outline-1 -outline-offset-1 outline-[#b9d7ec]' : ''}`}>
              <td className="p-0 pl-2 border-r border-[#ececec]"><div className="flex items-center gap-[2px] leading-[21px]">{f.icon}{f.name}</div></td>
              <td className="p-0 pl-[6px] overflow-hidden leading-[21px]">{f.type}</td>
            </tr>
          ))}
          <tr><td className="border-r border-[#ececec]" /><td /></tr>
        </tbody>
      </table>
    </div>
    <div className="h-4 bg-[#f3f3f3] flex items-center px-[5px]">
      <svg viewBox="0 0 5 8" className="w-[5px] h-[7px]"><path d="M5 0L0 4l5 4z" fill="#333" /></svg>
      <div className="ml-2 w-[248px] h-[15px] border border-[#8e8e8e] rounded-[2px] bg-gradient-to-b from-[#f0f0f0] to-[#c6c6c6] flex items-center justify-center gap-[2px]">
        <span className="w-px h-[6px] bg-[#555]" /><span className="w-px h-[6px] bg-[#555]" /><span className="w-px h-[6px] bg-[#555]" />
      </div>
      <svg viewBox="0 0 5 8" className="ml-auto w-[5px] h-[7px]"><path d="M0 0l5 4-5 4z" fill="#333" /></svg>
    </div>
  </div>
);

const FileDialog = () => (
  <section className={`absolute left-0 top-[241px] w-[637px] rounded-tr-lg rounded-br-lg border border-l-0 border-[#20262c] shadow-[0_0_10px_3px_rgba(0,0,0,0.6)] bg-[linear-gradient(180deg,#6a6d70_0,#a5a8ab_135px,#14171a_140px,#14171a_330px,#86a8cc_370px,#3d5068_430px,#86a8cc_470px)] pr-[4px] pb-[4px] text-xs text-black ${SONG}`}>
    <header className="h-[27px] -mr-1 rounded-tr-lg border-t border-[#c9d4e0] flex items-start overflow-hidden relative bg-[linear-gradient(90deg,#c6cbd0_0,#b0c4dc_110px,#a5c8ec_300px,#b2d1f1_515px,#55585b_530px,#606468_637px)]">
      <div className="absolute left-[412px] -top-2 w-[75px] h-4 bg-black blur-[3px]" />
      <div className="absolute left-24 top-5 w-28 h-2 bg-[#7f95ad]/60 blur-[3px]" />
      <div className={`flex items-center gap-[5px] -ml-[10px] pt-1 ${SANS}`}>
        <span className="w-[15px] h-[14px] bg-[#f4d3d2] flex justify-end"><AutodeskA className="w-[13px] h-[14px]" /></span>
        <span>选择图形文件</span>
      </div>
      <button aria-label="关闭" className="ml-auto mr-1 w-12 h-[19px] border border-t-0 border-[#e5c3bd] rounded-b bg-gradient-to-b from-[#d99485] via-[#b9341f] to-[#c8503a] flex items-center justify-center"><CloseX /></button>
    </header>
    <div className="bg-[#eee] border-t border-r border-b border-[#1c2228] h-[441px] pt-1">
      <div className="flex items-center h-6 pl-[34px]">
        <label htmlFor="look-in" className="w-[84px] pt-[3px] shrink-0">查找范围(I):</label>
        <div className={`w-[245px] h-6 pl-1 pr-1 ${DIALOG_BTN}`}>
          <FolderIcon />
          <select id="look-in" className="appearance-none flex-1 h-full pl-[2px] bg-transparent outline-none"><option>新建文件夹 (2)</option></select>
          <Caret className="text-black" />
        </div>
        <div className="ml-[10px] flex items-center gap-[1px]">
          <button aria-label="后退"><Ico><path d="M2 10l7-6v4h9v4H9v4z" fill="#9b9b9b" stroke="#828282" /></Ico></button>
          <button aria-label="上一级"><Ico><path d="M2 3h7l1 2h6v10H2z" fill="#f0b46c" stroke="#b8742a" /><path d="M11 17h5v-4m-3 2l3-3 3 3" stroke="#244ea8" strokeWidth="2" /></Ico></button>
          <button aria-label="搜索 Web"><Ico><circle cx="9" cy="9" r="7" fill="#6fa3c8" stroke="#3d6d94" /><path d="M4 5c3-2 8-2 10 0l-3 3-4-1z" fill="#a9d3b5" /><circle cx="12" cy="12" r="4" fill="#dfeaf5" stroke="#28478c" strokeWidth="1.5" /><path d="M15 15l4 4" stroke="#28478c" strokeWidth="2" /></Ico></button>
          <button aria-label="删除"><Ico><path d="M4 4l13 13M16 4L4 17" stroke="#8a8a8a" strokeWidth="3" /></Ico></button>
          <button aria-label="新建文件夹"><Ico><path d="M2 3h7l1 2h6v10H2z" fill="#f0b46c" stroke="#b8742a" /><path d="M15 12v7M12 15h7" stroke="#244ea8" strokeWidth="2" /></Ico></button>
        </div>
        <button className="ml-[7px] flex items-center gap-4"><span>查看(<u>V</u>)</span><Caret className="text-black" /></button>
        <button className="ml-2 flex items-center gap-4"><span>工具(<u>L</u>)</span><Caret className="text-black" /></button>
      </div>
      <div className="flex pt-[6px]">
        <aside className="w-[108px] h-[395px] shrink-0 bg-[#bccbda] border-t border-r border-[#7b8690] pt-1 flex flex-col gap-1 pr-2">
          {PLACES.map((p) => (
            <button key={p.label} className={`flex flex-col items-center text-white ${p.font ?? ''}`}>
              {p.art}
              <span className="leading-5">{p.label}</span>
            </button>
          ))}
        </aside>
        <div className="pl-[10px] flex flex-col">
          <div className="flex items-start gap-[5px]">
            <FileList />
            <fieldset className="w-[196px] h-[115px] border border-[#dcdcdc] rounded-[3px]">
              <legend className="ml-[5px] px-[3px] leading-4">预览</legend>
            </fieldset>
          </div>
          <div className="mt-[29px] flex items-center h-6">
            <label htmlFor="file-name" className="w-[77px] pl-[2px] pt-1">文件名(N):</label>
            <div className="w-[330px] h-[21px] bg-white border border-[#a9cfe6] border-t-[#4f7ba5] flex items-center pr-1">
              <input id="file-name" className="flex-1 min-w-0 h-full px-1 bg-transparent outline-none" />
              <Caret className="text-black" />
            </div>
            <button className={`ml-[14px] -mt-1 w-[65px] h-5 ${DIALOG_BTN}`}>打开(<u>O</u>)</button>
            <button aria-label="打开方式" className={`ml-[3px] -mt-1 w-[14px] h-5 ${DIALOG_BTN}`}><Caret className="text-black" /></button>
          </div>
          <div className="mt-[5px] flex items-center h-6">
            <label htmlFor="file-type" className="w-[77px] pl-[2px] pt-1">文件类型(T):</label>
            <div className={`w-[330px] h-[21px] pr-1 ${DIALOG_BTN}`}>
              <select id="file-type" className="appearance-none flex-1 h-full pl-[2px] bg-transparent outline-none"><option>图形 (*.dwg)</option></select>
              <Caret className="text-black" />
            </div>
            <button className={`ml-[14px] -mt-1 w-[82px] h-5 ${DIALOG_BTN}`}>取消</button>
          </div>
        </div>
      </div>
    </div>
    <svg viewBox="0 0 14 20" className="absolute left-[215px] top-[86px] w-[14px] h-5">
      <path d="M1 1v15l4-3 3 6 3-1-3-6h5z" fill="#f5f5f5" stroke="#222" />
    </svg>
  </section>
);

/* ---------- status bar and taskbar ---------- */

const Cell: React.FC<{ w: string; children?: React.ReactNode; open?: boolean }> = ({ w, children, open }) => (
  <div className={`h-full flex items-center justify-center shrink-0 ${open ? '' : 'border-r border-[#7a7a7a]'} ${w}`}>{children}</div>
);

const BLUE = '#2f7de0';

const CubeIcon: React.FC<{ children?: React.ReactNode }> = ({ children }) => (
  <Ico><path d="M10 2l7 4v8l-7 4-7-4V6zM3 6l7 4 7-4M10 10v8" stroke="#c4c4c4" strokeWidth="1.3" />{children}</Ico>
);

const Person: React.FC<{ color: string; children?: React.ReactNode }> = ({ color, children }) => (
  <Ico><path d="M10 2l2 8 6 6-2 1-6-3-6 3-2-1 6-6z" fill={color} />{children}</Ico>
);

const StatusBar = () => (
  <footer className="h-7 flex items-center bg-[#4b4b4b] border-t border-[#7a7a7a] text-white text-xs overflow-hidden">
    <div className="w-[160px] h-full bg-[#262626] shrink-0" />
    <Cell w="w-[153px]"><span className="pl-7 text-[#c9c9c9]">23898.2, 9599.3, 0.0</span></Cell>
    <Cell w="w-8"><span className="text-[#c9c9c9]">模型</span></Cell>
    <Cell w="w-[66px]"><Ico><path d="M2 6h16M2 10h16M2 14h16M6 3v13M10 3v13M14 3v13" stroke="#aaa" /></Ico><Ico className="w-5 h-5 ml-1"><path d="M2 6h16M2 10h16M2 14h16" stroke="#aaa" strokeDasharray="1 2" /></Ico></Cell>
    <Cell w="w-6"><span className="w-[5px] h-3 bg-[#ccc]" /></Cell>
    <Cell w="w-[25px]"><span className="w-[11px] h-3 bg-[#2f7de0]" /></Cell>
    <Cell w="w-[28px]" open><Ico><path d="M4 2v14h14M4 9h6v7" stroke={BLUE} strokeWidth="2" /></Ico></Cell>
    <Cell w="w-8" open><Ico><circle cx="10" cy="8" r="7" stroke="#bbb" /></Ico></Cell>
    <Cell w="w-[43px]"><Ico><path d="M6 4v13M7 9l8 8" stroke="#999" /></Ico></Cell>
    <Cell w="w-[25px]"><Ico><path d="M3 16h15M5 16L15 5" stroke={BLUE} strokeWidth="2" /></Ico></Cell>
    <Cell w="w-[39px]"><Ico><path d="M4 5h13v11H4z" stroke={BLUE} strokeWidth="2" /></Ico></Cell>
    <Cell w="w-[25px]"><Ico><path d="M2 5h16M2 9h16M2 13h16M2 17h10" stroke={BLUE} strokeWidth="2" /></Ico></Cell>
    <Cell w="w-[25px]"><Ico><path d="M3 3h14v14H3z" stroke={BLUE} strokeWidth="2" /><path d="M5 5h2v2H5zM9 5h2v2H9zM13 5h2v2h-2zM7 7h2v2H7zM11 7h2v2h-2zM5 9h2v2H5zM9 9h2v2H9zM13 9h2v2h-2zM7 11h2v2H7zM11 11h2v2h-2zM5 13h2v2H5zM9 13h2v2H9zM13 13h2v2h-2z" fill={BLUE} /></Ico></Cell>
    <Cell w="w-[25px]"><Ico><path d="M4 1v7M1 4h7" stroke="#ccc" /><path d="M7 7h9v9H7z" fill="#7fae62" stroke="#a6cf8b" /></Ico></Cell>
    <Cell w="w-[41px]"><CubeIcon><path d="M1 1h6v6H1z" fill="#0c2a12" stroke="#2c8c3c" /></CubeIcon><Caret className="ml-[6px] text-white" /></Cell>
    <Cell w="w-[105px]">
      <Ico><path d="M3 2v15h15M4 16L15 6" stroke={BLUE} strokeWidth="1.6" /><path d="M15 1l-4 5h3l-2 4 6-5h-3l2-4z" fill={BLUE} /></Ico>
      <span className="ml-1 flex"><CubeIcon /></span><Caret className="ml-[5px] text-white" />
      <Ico className="w-5 h-5 ml-2"><path d="M10 2l7 4v8l-7 4-7-4V6z" stroke="#a9a9a9" /><circle cx="10" cy="10" r="2" stroke="#ddd" /><circle cx="3" cy="14" r="2" stroke="#3fae4a" /><circle cx="17" cy="14" r="2" stroke="#d2433a" /><path d="M10 1v4" stroke={BLUE} strokeWidth="2" /></Ico>
      <Caret className="ml-[5px] text-white" />
    </Cell>
    <Cell w="w-[79px]" open>
      <Person color={BLUE}><circle cx="14" cy="4" r="3" stroke={BLUE} strokeWidth="1.5" /></Person>
      <span className="mx-1 flex"><Person color="#bbb"><path d="M15 1l-3 5h3l-2 5" stroke="#ddd" strokeWidth="1.5" /></Person></span>
      <Person color="#bbb" />
    </Cell>
    <span className="text-xs shrink-0">1:1 / 100%</span>
    <div className="ml-auto h-full flex items-center">
      <Cell w="w-[21px]"><Caret className="text-white mr-4" /></Cell>
      <Cell w="w-[27px]"><Ico className="w-[14px] h-[14px]"><path d="M4 3h12v14H4z" stroke="#c4c4c4" /><path d="M6 7h8M6 10h8M6 13h8M10 5v10" stroke="#c4c4c4" /></Ico></Cell>
      <Cell w="w-[41px]"><Ico><path d="M2 12V3h13v5M2 6h13" stroke="#c4c4c4" strokeWidth="1.5" /><path d="M10 11h7v6h-7z" fill="#c4c4c4" /><path d="M15 11V9a2 2 0 014 0" stroke="#c4c4c4" /></Ico><Caret className="ml-[3px] text-white" /></Cell>
      <Cell w="w-[27px]"><Ico><path d="M2 3h6v6H2z" stroke="#c4c4c4" strokeWidth="1.4" /><circle cx="14" cy="9" r="3.5" stroke="#c4c4c4" strokeWidth="1.4" /><path d="M8 12l4 6H4z" stroke="#c4c4c4" strokeWidth="1.4" /></Ico></Cell>
      <Cell w="w-[27px]"><Ico><circle cx="10" cy="10" r="8" fill="#155a9c" stroke="#1f6fc0" strokeWidth="1.5" /><path d="M6 9l3 3 5-4" stroke="#0d2f55" strokeWidth="2" /></Ico></Cell>
      <Cell w="w-[25px]"><Ico><path d="M3 3h9l3 3v9H3z" fill="#5d7f9e" /><path d="M3 9c4-1 8 1 12 3v3H3z" fill="#f0c63a" /><path d="M3 5h6M6 2v6" stroke="#eef" strokeWidth="1.5" /><path d="M9 14l3 3 6-6" stroke="#6cc24a" strokeWidth="2" /></Ico></Cell>
      <Cell w="w-6" open><Ico className="w-4 h-5"><path d="M1 4h18v12H1z" stroke="#ccc" strokeWidth="1.4" /><path d="M15 7l-4 3M15 7h-3M15 7v3M5 13l4-3M5 13h3M5 13v-3" stroke="#ccc" strokeWidth="1.4" /></Ico></Cell>
      <Cell w="w-[22px]" open><Ico><path d="M2 5h18M2 10h18M2 15h18" stroke="#ccc" strokeWidth="2" /></Ico></Cell>
    </div>
  </footer>
);

const SogouLogo: React.FC<{ className: string }> = ({ className }) => (
  <svg viewBox="0 0 28 28" className={className} fill="none">
    <path d="M2 4L23 1l4 21-21 5z" fill="#e5501e" />
    <path d="M20 8c-5-3-11-1-11 2 0 4 10 3 10 7 0 4-7 4-11 2" stroke="#fff" strokeWidth="3.5" strokeLinecap="round" />
  </svg>
);

const ImeBar = () => (
  <div className="absolute left-[955px] bottom-8 h-[27px] flex items-center">
    <SogouLogo className="w-7 h-7 relative z-10" />
    <div className="-ml-[6px] w-[163px] h-[23px] bg-[#fafcff] flex items-center gap-[7px] pl-3 text-[#2878c4]">
      <button className="text-[14px] font-bold leading-5 shrink-0">英</button>
      <Ico className="w-[15px] h-4"><path d="M14 2c3 7-3 14-12 13 5 6 16 3 16-6 0-3-2-6-4-7z" fill="#2878c4" /></Ico>
      <Ico className="w-[15px] h-4"><circle cx="5" cy="6" r="2" stroke="#2878c4" strokeWidth="1.5" /><path d="M13 11h4c0 4-1 6-4 7 1-2 1-4 0-7z" fill="#2878c4" /></Ico>
      <Keyboard size={17} strokeWidth={2} className="shrink-0" />
      <Ico className="w-4 h-4"><circle cx="8" cy="4" r="4" fill="#c4c8cc" /><path d="M1 17c0-8 14-8 14 0z" fill="#c4c8cc" /><path d="M8 11h11v7H8z" fill="#fff" stroke="#b5b9bd" /></Ico>
      <Shirt size={14} fill="#2878c4" className="shrink-0" />
      <Wrench size={14} fill="#2878c4" className="shrink-0" />
    </div>
  </div>
);

const Taskbar = () => (
  <div className="h-[31px] shrink-0 relative overflow-hidden flex items-start border-t border-[#9fc4e0] bg-[linear-gradient(90deg,#16497f_0,#1d5a96_56px,#58b0de_185px,#4aa5d8_400px,#2f86c8_620px,#1e6db8_850px,#1a5fa8_1060px,#17457f_1250px,#143a6c_100%)]">
    <svg className="absolute inset-0 w-full h-full" fill="none">
      <path d="M900 -4c30 8 55 20 75 40" stroke="#8fc4f2" strokeWidth="8" opacity=".8" className="blur-[2px]" />
      <path d="M440 40C520 10 620 0 700-4" stroke="#7cc4ec" strokeWidth="8" opacity=".3" className="blur-[3px]" />
    </svg>
    <button aria-label="开始" className="relative w-[58px] h-[30px] shrink-0 flex justify-center pt-px pr-[6px]">
      <svg viewBox="0 0 38 38" className="w-[38px] h-[38px] shrink-0 overflow-visible">
        <circle cx="19" cy="19" r="18" fill="#1f5487" stroke="#88b4d6" />
        <path d="M5 13C9 3 29 3 33 13c-8 5-20 5-28 0z" fill="#a9c8e2" opacity=".7" />
        <path d="M10 11c3-2 5-2 8 0l-2 8c-3-1-5-1-8 0z" fill="#e8562a" /><path d="M20 12c3 2 6 2 8 0l-2 8c-3 2-5 1-8 0z" fill="#8cc63f" />
        <path d="M7 21c3-2 5-1 8 0l-2 7c-3-1-5-1-8 0z" fill="#3f9be0" /><path d="M17 22c3 1 5 1 8 0l-2 7c-3 2-5 1-8 0z" fill="#fbc52c" />
      </svg>
    </button>
    <button aria-label="AutoCAD" className="relative w-[59px] h-[30px] shrink-0 rounded-t border border-b-0 border-[#d8eaf6] bg-gradient-to-r from-[#e8dfe3] to-[#9cc9e3] flex justify-center pt-[3px]">
      <span className="w-8 h-8 bg-[#f7b9b6] flex justify-center pt-1"><AutodeskA className="w-5 h-[22px]" /></span>
    </button>
    <button aria-label="录屏" className="relative ml-[3px] w-[59px] h-[30px] shrink-0 rounded-t border border-b-0 border-[#b5daef] bg-gradient-to-r from-[#a8d8ee] to-[#6cbbe0] flex justify-center pt-[7px]">
      <svg viewBox="0 0 27 24" className="w-[27px] h-6 bg-white shrink-0"><circle cx="10" cy="12" r="5" fill="#ec6a2c" /><circle cx="15" cy="5" r="1.5" fill="#777" /><path d="M20 6h4v13h-4z" fill="#ec8a4c" /></svg>
    </button>
    <div className="relative ml-auto flex items-start text-white">
      <div className="flex items-center gap-[7px] pt-[7px] h-7">
        <SogouLogo className="w-4 h-4 shrink-0" />
        <span className="w-[15px] h-[15px] rounded-full bg-[#1b2ea0] border border-[#c7d3ef] text-[11px] leading-[13px] font-bold text-center">?</span>
        <span className="flex flex-col items-center gap-[5px] w-4"><Ico className="w-[9px] h-[9px]"><path d="M6 2h12v9M2 8h12v9H2z" stroke="#fff" strokeWidth="2" /></Ico><Caret className="scale-50" /></span>
        <Caret className="text-white rotate-180 scale-75" />
        <Ico className="w-4 h-4 ml-1"><path d="M1 16h2v3H1zM5 13h2v6H5zM9 10h2v9H9zM13 6h2v13h-2zM17 2h2v17h-2z" fill="#fff" /></Ico>
        <Ico className="w-4 h-4"><path d="M5 1h10v6H5z" fill="#dfe8f0" /><path d="M3 7h14v12H3z" fill="#3a9ad2" stroke="#a8d8f2" /><path d="M7 10v6M10 9v8M13 10v6" stroke="#fff" /></Ico>
        <Ico className="w-4 h-4 ml-[2px]"><path d="M2 3c6 1 10 1 16 0 1 8-2 13-8 16C4 16 1 11 2 3z" fill="#e8f3fb" /><path d="M5 8l5 5 5-5" stroke="#2f8ad2" strokeWidth="3" /></Ico>
        <Ico className="w-4 h-4"><path d="M10 3H3v15h8" stroke="#fff" strokeWidth="2" /><path d="M12 3v4M17 3v4M10 7h9v3l-3 3v5" stroke="#fff" strokeWidth="2" fill="#fff" /></Ico>
      </div>
      <div className="w-[74px] ml-[10px] text-center text-xs leading-[18px] whitespace-nowrap"><div>17:18</div><div>2020/4/26</div></div>
      <button aria-label="显示桌面" className="ml-[2px] w-[9px] h-[30px] border-l border-[#7fa1c6] bg-[#4c6c92]" />
    </div>
  </div>
);

export default function App() {
  return (
    <div className={`relative h-screen w-full overflow-hidden flex flex-col bg-[#595959] text-xs ${SANS}`}>
      <TitleBar />
      <MenuBar />
      <button aria-label="应用程序菜单" className="absolute left-0 top-0 w-10 h-[41px] border border-black bg-gradient-to-b from-[#b5b5b5] to-[#707070] flex items-center gap-1 pl-[3px]">
        <AutodeskA className="w-[23px] h-[26px] shrink-0" />
        <Caret className="text-black scale-75" />
      </button>
      <TabStrip />
      <div className="pt-[2px] pb-1 flex flex-col gap-px overflow-hidden shrink-0">
        <StandardBar />
        <LayerBar />
      </div>
      <main className="flex-1 min-h-0 flex">
        <DrawBar />
        <div className="w-1 shrink-0" />
        <Canvas />
        <VScroll />
        <ModifyBar />
      </main>
      <div className="h-[18px] shrink-0 flex items-center justify-end bg-[#ededed] mr-[27px] pr-6">
        <div className="w-[15px] h-[15px] border border-[#8c8c8c] bg-gradient-to-b from-[#f8f8f8] to-[#cfcfcf]" />
        <svg viewBox="0 0 5 8" className="ml-[87px] w-1 h-[7px]"><path d="M0 0l5 4-5 4z" fill="#333" /></svg>
      </div>
      <div className="shrink-0 pt-[2px] bg-[#5a5a5a]">
        <div className="h-[34px] bg-white border-b border-[#777]" />
        <label className="block h-6 bg-white"><input aria-label="命令行" className="w-full h-full px-2 outline-none" /></label>
        <div className="h-5 bg-[#353535]" />
      </div>
      <StatusBar />
      <Taskbar />
      <UsbBadge />
      <OrderBar />
      <InsertDialog />
      <FileDialog />
      <ImeBar />
    </div>
  );
}
